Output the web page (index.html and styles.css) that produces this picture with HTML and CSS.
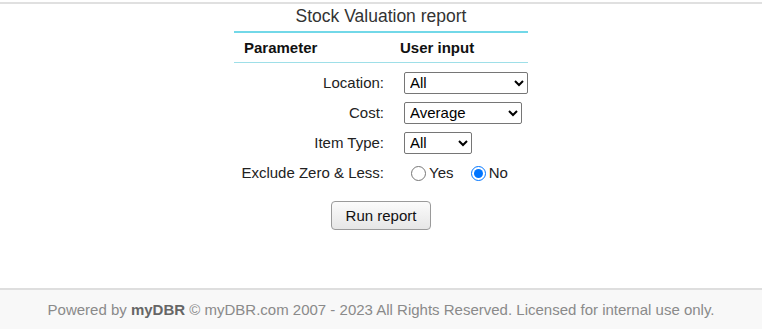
FILE: index.html
```html
<!DOCTYPE html>
<html lang="en">
<head>
  <meta charset="UTF-8">
  <meta name="viewport" content="width=device-width, initial-scale=1.0">
  <title>Stock Valuation report</title>
  <link rel="stylesheet" href="styles.css">
</head>
<body>
  <div class="topline"></div>
  <div class="main">
    <div class="report-title">Stock Valuation report</div>
    <form class="params">
      <table class="param-table">
        <thead>
          <tr>
            <th class="col-name">Parameter</th>
            <th class="col-input">User input</th>
          </tr>
        </thead>
        <tbody>
          <tr class="first">
            <td class="label">Location:</td>
            <td class="input">
              <select class="sel sel-location"><option>All</option></select>
            </td>
          </tr>
          <tr>
            <td class="label">Cost:</td>
            <td class="input">
              <select class="sel sel-cost"><option>Average</option></select>
            </td>
          </tr>
          <tr>
            <td class="label">Item Type:</td>
            <td class="input">
              <select class="sel sel-type"><option>All</option></select>
            </td>
          </tr>
          <tr>
            <td class="label">Exclude Zero &amp; Less:</td>
            <td class="input">
              <label class="radio"><input type="radio" name="zero">Yes</label>
              <label class="radio"><input type="radio" name="zero" checked>No</label>
            </td>
          </tr>
        </tbody>
      </table>
      <div class="actions">
        <button type="button" class="run">Run report</button>
      </div>
    </form>
  </div>
  <div class="footer">
    Powered by <b>myDBR</b> &copy; myDBR.com 2007 - 2023 All Rights Reserved. Licensed for internal use only.
  </div>
</body>
</html>
```

FILE: styles.css
```css
body {
  margin: 0;
  font-family: "Liberation Sans", Arial, sans-serif;
  color: #222;
  background: #fff;
}

.topline {
  margin-top: 2px;
  height: 2px;
  background-color: #e0e0e0;
}

.main {
  height: 284px; /* footer starts at 288 */
  display: flex;
  flex-direction: column;
  align-items: center;
}

.report-title {
  font-size: 17.5px;
  color: #333;
  padding-top: 2px;
  height: 25px;
  line-height: 20px;
}

.param-table {
  width: 294px;
  border-collapse: collapse;
  font-size: 15px;
}

.param-table thead tr {
  border-top: 2px solid #72d8e8;
  border-bottom: 1px solid #9edfe8;
}

.param-table th {
  height: 29px;
  text-align: left;
  font-weight: bold;
  color: #111;
  padding: 0;
}

.col-name {
  width: 150px;
  padding-left: 10px !important;
}

.col-input {
  padding-left: 6px !important;
}

.param-table tbody tr {
  height: 30px;
}

.param-table tbody tr.first {
  height: 35px;
}

.param-table tbody tr.first td {
  padding-top: 5px;
}

.label {
  text-align: right;
  padding: 0 10px 0 0;
  color: #222;
  white-space: nowrap;
}

.input {
  padding: 0 0 0 10px;
}

.sel {
  height: 22px;
  font-family: "Liberation Sans", Arial, sans-serif;
  font-size: 15px;
  color: #000;
  border: 1px solid #767676;
  border-radius: 2px;
  background: #fff;
  padding: 0 1px;
}

.sel-location { width: 124px; }
.sel-cost { width: 118px; }
.sel-type { width: 68px; }

.radio {
  margin-right: 6px;
  white-space: nowrap;
}

.radio input {
  margin: 0 3px 0 7px;
  width: 15px;
  height: 15px;
  vertical-align: -3px;
}

.actions {
  text-align: center;
  margin-top: 13px;
}

.run {
  font-family: "Liberation Sans", Arial, sans-serif;
  font-size: 15px;
  color: #111;
  width: 100px;
  height: 29px;
  border: 1px solid #9a9a9a;
  border-radius: 4px;
  background: linear-gradient(#fbfbfb, #e6e6e6);
  cursor: pointer;
}

.footer {
  border-top: 2px solid #dedede;
  background-color: #f8f8f8;
  height: 39px;
  line-height: 40px;
  text-align: center;
  font-size: 15px;
  color: #8a8a8a;
}

.footer b {
  color: #666;
}
```
